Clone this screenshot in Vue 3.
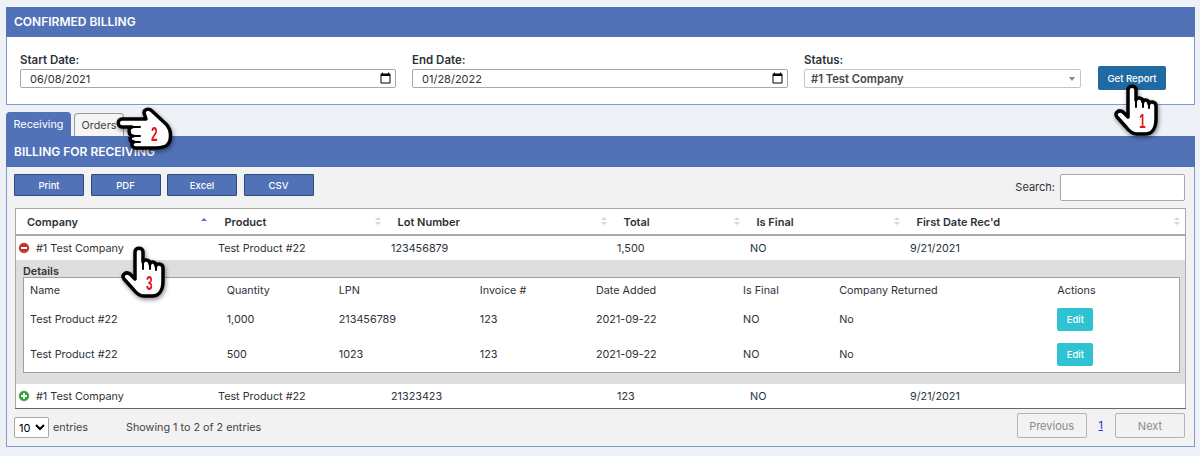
<template>
  <div class="page">
    <section class="panel filter-panel">
      <h2 class="panel-title">CONFIRMED BILLING</h2>
      <form class="filters" @submit.prevent>
        <label class="field date-field">
          <span>Start Date:</span>
          <input v-model="startDate" type="date" />
        </label>
        <label class="field date-field">
          <span>End Date:</span>
          <input v-model="endDate" type="date" />
        </label>
        <div class="field status-field">
          <span>Status:</span>
          <div class="fake-select">#1 Test Company<i class="caret"></i></div>
        </div>
        <button class="report-btn" type="submit">Get Report</button>
      </form>
    </section>

    <div class="tabs">
      <button class="tab active" type="button">Receiving</button>
      <button class="tab" type="button">Orders</button>
    </div>

    <section class="panel report-panel">
      <h2 class="panel-title">BILLING FOR RECEIVING</h2>
      <div class="report-body">
        <div class="toolbar">
          <div class="exports">
            <button v-for="b in exportButtons" :key="b" type="button">{{ b }}</button>
          </div>
          <label class="search">Search: <input type="text" /></label>
        </div>

        <table class="grid">
          <colgroup>
            <col v-for="w in mainWidths" :key="w" :style="{ width: w + 'px' }" />
          </colgroup>
          <thead>
            <tr>
              <th v-for="(h, i) in mainHeaders" :key="h">
                {{ h }}
                <span class="sort" :class="{ asc: i === 0 }"><b></b><b></b></span>
              </th>
            </tr>
          </thead>
          <tbody>
            <tr>
              <td class="first">
                <span class="toggle minus"></span>#1 Test Company
              </td>
              <td>Test Product #22</td>
              <td>123456879</td>
              <td>1,500</td>
              <td>NO</td>
              <td>9/21/2021</td>
            </tr>
            <tr class="detail-row">
              <td colspan="6">
                <div class="details-label">Details</div>
                <table class="inner">
                  <colgroup>
                    <col v-for="w in innerWidths" :key="w" :style="{ width: w + 'px' }" />
                  </colgroup>
                  <thead>
                    <tr>
                      <th v-for="h in innerHeaders" :key="h">{{ h }}</th>
                    </tr>
                  </thead>
                  <tbody>
                    <tr v-for="r in details" :key="r.lpn">
                      <td>Test Product #22</td>
                      <td>{{ r.qty }}</td>
                      <td>{{ r.lpn }}</td>
                      <td>123</td>
                      <td>2021-09-22</td>
                      <td>NO</td>
                      <td>No</td>
                      <td><button class="edit" type="button">Edit</button></td>
                    </tr>
                  </tbody>
                </table>
              </td>
            </tr>
            <tr>
              <td class="first">
                <span class="toggle plus"></span>#1 Test Company
              </td>
              <td>Test Product #22</td>
              <td>21323423</td>
              <td>123</td>
              <td>NO</td>
              <td>9/21/2021</td>
            </tr>
          </tbody>
        </table>

        <div class="table-foot">
          <label class="length">
            <select><option>10</option></select>
            entries
          </label>
          <span class="info">Showing 1 to 2 of 2 entries</span>
          <div class="pager">
            <button type="button" disabled>Previous</button>
            <a href="#">1</a>
            <button type="button" disabled>Next</button>
          </div>
        </div>
      </div>
    </section>

    <!-- numbered callouts lying over the screen -->
    <svg v-for="c in pointers" :key="c.n" class="callout" :style="{ left: c.x + 'px', top: c.y + 'px' }" width="60" height="70" viewBox="0 0 60 70">
      <path class="hand" d="M15 9C15 4 23 4 23 9V19C23 16 30 16 30 21C30 18 36 18 36 23C36 20 43 20 43 25V38C43 47 39 53 32 53H24C19 53 16 50 13 46L4 36C1 32 6 28 10 31L15 36Z" />
      <path class="creases" d="M23 19V26M30 21V26M36 23V27" />
      <text class="digit" transform="translate(26 47) scale(0.85 1.45)">{{ c.n }}</text>
    </svg>
    <svg class="callout" style="left: 100px; top: 100px" width="80" height="60" viewBox="0 0 80 60">
      <path class="hand" d="M22 19H46L44 13C44 9 49 8 52 11L66 24C72 30 72 42 66 46C60 49 50 48 44 48H36C31 48 31 42 34 42C29 42 29 36 33 36C28 36 28 27 32 27H22C17 27 17 19 22 19Z" />
      <path class="creases" d="M32 27H40M33 36H40M34 42H40" />
      <text class="digit" transform="translate(51 41) scale(0.85 1.45)">2</text>
    </svg>
  </div>
</template>

<script setup>
import { ref } from 'vue'

const startDate = ref('2021-06-08')
const endDate = ref('2022-01-28')

const exportButtons = ['Print', 'PDF', 'Excel', 'CSV']
const mainHeaders = ['Company', 'Product', 'Lot Number', 'Total', 'Is Final', "First Date Rec'd"]
const mainWidths = [197, 173, 226, 133, 160, 281]
const innerHeaders = ['Name', 'Quantity', 'LPN', 'Invoice #', 'Date Added', 'Is Final', 'Company Returned', 'Actions']
const innerWidths = [197, 112, 141, 116, 147, 96, 218, 128]
const details = [
  { qty: '1,000', lpn: '213456789' },
  { qty: '500', lpn: '1023' },
]
const pointers = [
  { n: 1, x: 1113, y: 81 },
  { n: 3, x: 120, y: 243 },
]
</script>

<style>
html, body { margin: 0; background: #eef1f6; }
</style>

<style scoped>
.page {
  position: relative;
  width: 1200px;
  height: 456px;
  padding: 7px 5px 0 6px;
  box-sizing: border-box;
  overflow: hidden;
  font-family: Inter, "Liberation Sans", sans-serif;
  font-size: 10.8px;
  color: #2d3238;
}
.panel {
  border: 1px solid #7f9bd3;
  border-top: none;
  background: #fff;
}
.panel-title {
  margin: 0 -1px;
  height: 30px;
  padding: 0 8px;
  line-height: 30px;
  font-size: 12px;
  font-weight: 600;
  color: #fff;
  background: #5272b8;
}
.filter-panel { height: 98px; box-sizing: border-box; }
.filters {
  display: flex;
  align-items: flex-start;
  padding: 15px 0 0 13px;
}
.field { display: flex; flex-direction: column; margin-right: 16px; }
.field > span { font-weight: 600; font-size: 11.5px; line-height: 17px; }
.date-field input {
  width: 376px;
  height: 19px;
  box-sizing: border-box;
  padding: 0 3px 0 9px;
  border: 1px solid #a8a8a8;
  border-radius: 2px;
  font: 11px Inter, sans-serif;
  color: #2d3238;
  background: #fff;
}
.date-field input::-webkit-datetime-edit-month-field,
.date-field input::-webkit-datetime-edit-day-field,
.date-field input::-webkit-datetime-edit-year-field,
.date-field input::-webkit-datetime-edit-text {
  padding: 0;
}
.date-field input::-webkit-calendar-picker-indicator {
  width: 13px;
  height: 13px;
  padding: 0;
  margin: 0;
  filter: brightness(0);
}
.status-field { margin-right: 17px; }
.fake-select {
  position: relative;
  width: 277px;
  height: 19px;
  box-sizing: border-box;
  padding-left: 6px;
  line-height: 18px;
  border: 1px solid #c4c4c4;
  border-radius: 2px;
  font-size: 11.2px;
  font-weight: 600;
  color: #444;
}
.caret {
  position: absolute;
  right: 5px;
  top: 7px;
  border: 3px solid transparent;
  border-top: 4px solid #888;
  border-bottom: none;
}
.report-btn {
  width: 68px;
  height: 24px;
  margin-top: 14px;
  border: none;
  border-radius: 2px;
  font: 500 9.6px Inter, sans-serif;
  color: #fff;
  background: #1f6aa3;
}

.tabs { display: flex; gap: 3px; height: 24px; margin-top: 7px; align-items: flex-end; }
.tab {
  height: 23px;
  width: 50px;
  padding: 0;
  border: 1px solid #999;
  border-bottom: none;
  border-radius: 4px 4px 0 0;
  font: 10.8px Inter, sans-serif;
  color: #444;
  background: #f5f5f5;
}
.tab.active {
  width: 65px;
  height: 24px;
  color: #fff;
  border-color: #5272b8;
  background: #5272b8;
}

.report-panel { height: 311px; box-sizing: border-box; background: #f2f2f2; }
.report-panel .panel-title { height: 31px; line-height: 31px; }
.report-body { padding: 7px 9px 0 7px; }
.toolbar { display: flex; justify-content: space-between; height: 34px; }
.exports { display: flex; gap: 6.5px; }
.exports button {
  width: 70px;
  height: 22px;
  padding: 0;
  border: 1px solid #2c4a7a;
  border-radius: 1px;
  font: 500 9.5px Inter, sans-serif;
  color: #fff;
  background: #5272b8;
}
.search { display: flex; gap: 5px; align-items: flex-start; line-height: 27px; font-size: 11px; }
.search input {
  width: 125px;
  height: 27px;
  box-sizing: border-box;
  border: 1px solid #a8a8a8;
  border-radius: 2px;
  background: #fff;
}

.grid {
  width: 1170px;
  margin-left: 1px;
  table-layout: fixed;
  border-collapse: collapse;
  border: 1px solid #a9a9a9;
  border-bottom-color: #666;
  background: #fff;
}
.grid > thead th {
  position: relative;
  height: 25px;
  padding: 0 0 0 12px;
  text-align: left;
  font-weight: 600;
  font-size: 11px;
  border-bottom: 2px solid #a9a9a9;
}
.grid > thead th:first-child { padding-left: 11px; }
.grid > thead th:first-child .sort { right: 6px; top: 9px; }
.sort {
  position: absolute;
  right: 5px;
  top: 8px;
  display: flex;
  flex-direction: column;
  gap: 2px;
}
.sort b {
  border: 3px solid transparent;
  border-top: none;
  border-bottom: 3px solid #d6d6d6;
}
.sort b:last-child {
  border-bottom: none;
  border-top: 3px solid #d6d6d6;
}
.sort.asc b:first-child { border-bottom-color: #5c6fd0; }
.sort.asc b:last-child { border-top-color: transparent; }
.grid > tbody > tr > td { height: 24px; padding: 0 0 0 5.5px; }
.grid > tbody > tr > td.first { padding-left: 3px; }
.toggle {
  display: inline-block;
  position: relative;
  width: 10px;
  height: 10px;
  margin-right: 7px;
  border-radius: 50%;
  vertical-align: -1px;
  box-shadow: 0 0 0 1px #e8e8e8;
}
.toggle::before {
  content: "";
  position: absolute;
  left: 2px;
  right: 2px;
  top: 4px;
  height: 2px;
  background: #fff;
}
.toggle.minus { background: #c9302c; }
.toggle.plus { background: #2aa52e; }
.toggle.plus::after {
  content: "";
  position: absolute;
  top: 2px;
  bottom: 2px;
  left: 4px;
  width: 2px;
  background: #fff;
}
.grid > tbody > tr.detail-row > td {
  height: 124px;
  padding: 6px 6px 11px 7px;
  box-sizing: border-box;
  vertical-align: top;
  background: #dedede;
}
.details-label { font-weight: 600; line-height: 11px; color: #333; }
.inner {
  width: 1157px;
  table-layout: fixed;
  border-collapse: collapse;
  border: 1px solid #a0a0a0;
  background: #fff;
}
.inner th {
  height: 24px;
  padding: 0 0 0 6px;
  text-align: left;
  font-weight: 400;
}
.inner td { height: 35px; padding: 0 0 0 6px; }
.edit {
  display: block;
  width: 36px;
  height: 23px;
  padding: 0;
  border: none;
  border-radius: 2px;
  font: 500 9.5px Inter, sans-serif;
  color: #fff;
  background: #2fc2d2;
}

.table-foot { display: flex; align-items: flex-start; margin-top: 5px; }
.length { display: flex; align-items: center; gap: 4px; margin-top: 3px; width: 112px; color: #444; }
.length select {
  width: 35px;
  height: 21px;
  border: 1px solid #a8a8a8;
  border-radius: 2px;
  font: 11px Inter, sans-serif;
  background: #fff;
}
.info { margin-top: 7px; color: #444; }
.pager { display: flex; align-items: center; gap: 12px; margin: -1px 0 0 auto; }
.pager button {
  width: 70px;
  height: 25px;
  padding: 0;
  border: 1px solid #b3b3b3;
  border-radius: 2px;
  font: 11px Inter, sans-serif;
  color: #8a8a8a;
  background: #f2f2f2;
}
.pager a { color: #2a2ae0; }

.callout {
  position: absolute;
  overflow: visible;
  filter: drop-shadow(1px 2px 2px rgba(0, 0, 0, 0.45));
}
.hand { fill: #fff; stroke: #000; stroke-width: 3.5; stroke-linejoin: round; }
.creases { fill: none; stroke: #000; stroke-width: 2; stroke-linecap: round; }
.digit {
  font-family: "Liberation Sans", sans-serif;
  font-size: 14px;
  font-weight: 700;
  fill: #e8131b;
}
</style>
